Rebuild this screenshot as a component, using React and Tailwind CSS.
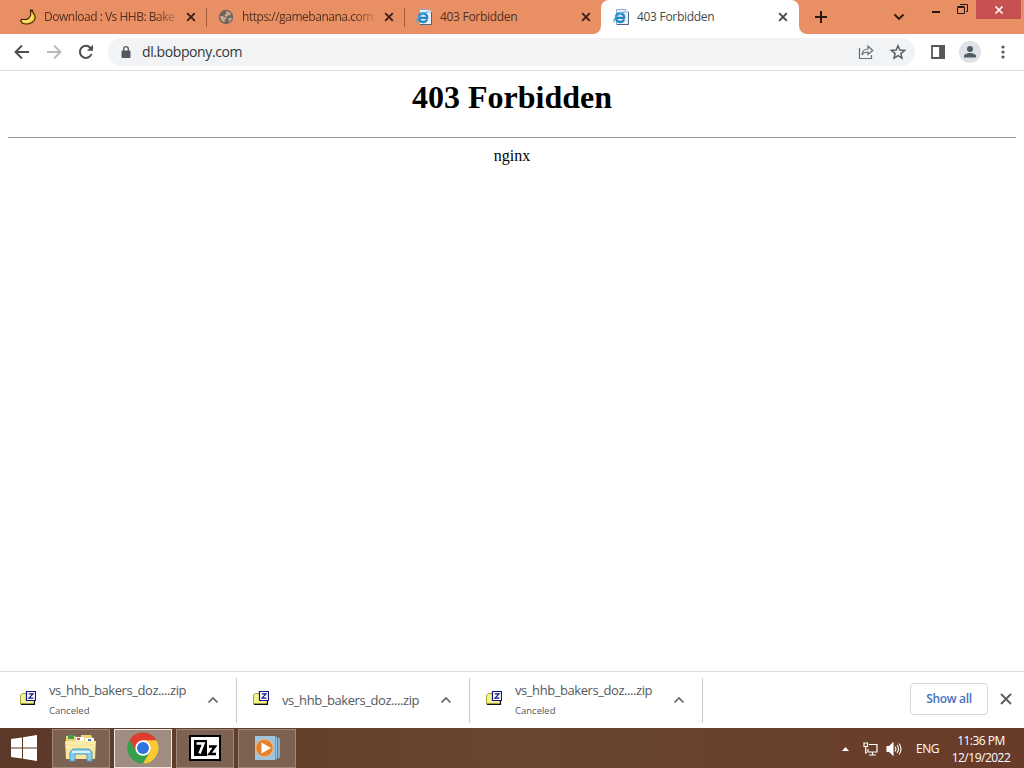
import React from 'react';

const CloseIcon = ({ className = 'text-[#3a2a22]' }) => (
  <svg viewBox="0 0 14 14" className={`w-3.5 h-3.5 shrink-0 ${className}`} fill="none" stroke="currentColor" strokeWidth="1.900">
    <path d="M3.200 3.200l7.600 7.600M10.800 3.200l-7.600 7.600" />
  </svg>
);

const BananaIcon = () => (
  <svg viewBox="0 0 16 16" className="w-4 h-4 shrink-0">
    <path d="M10.500 1l2 .2.3 2.300c2.500 2.200 3 5 1.600 7.700-2 3.500-8.700 4.800-12.200 2.800L.6 11.600l1-1.300c4 .8 7.600-.3 8.700-3.300.6-1.500.5-2.600.2-4z" fill="#f7cf35" stroke="#3b2108" strokeWidth="1.100" />
    <path d="M3 12c4.300.9 8-.8 9-5" fill="none" stroke="#fff3a0" strokeWidth="1.300" />
    <path d="M10.600 1.300h1.800v1.500h-1.800z" fill="#3b2108" />
  </svg>
);

const GlobeIcon = () => (
  <svg viewBox="0 0 16 16" className="w-4 h-4 shrink-0">
    <circle cx="8" cy="8" r="7.200" fill="#6c665f" />
    <path d="M2.200 7c1.800-.2 3.300 0 4 1.200h2.300v1.600l-1.700.8v2.600C4 12.800 2 10 2.200 7zM8 2.200c2.200-.2 4 .8 5 2.600l-1.200 1.700-2.300.1-.8 1.200-1.900-.6V5.500l1.400-.6zM10.500 9l3.300-.3c-.2 2-1.300 3.400-2.900 4.300z" fill="#c9a78e" />
  </svg>
);

const IeIcon = () => (
  <svg viewBox="0 0 16 16" className="w-4 h-4 shrink-0">
    <path d="M3.500.5h9L15.500 3v12.500h-12z" fill="#e9f2fb" stroke="#8eabc9" />
    <path d="M15.500 3v12.500H4" fill="none" stroke="#4c6685" />
    <path d="M12.500.5V3h3" fill="#fff" stroke="#8eabc9" strokeWidth=".8" />
    <path d="M11 10.300c-.6 1.800-2 2.700-3.800 2.700-2.500 0-4.200-1.700-4.200-4.200s1.700-4.300 4.200-4.300c2.600 0 4.200 1.800 4 4.400H4" fill="none" stroke="#2384c6" strokeWidth="2.300" />
    <path d="M1.200 13.500C-.5 10.700 5 4 11.700 3.200" fill="none" stroke="#49b0e4" strokeWidth="1.200" />
  </svg>
);

const Tab = ({ icon, title, width, closeGap = 'ml-[9px]', fade, separator, active }) => (
  <div className={`relative flex h-[34px] shrink-0 items-center pl-3 ${width} ${active ? 'rounded-t-lg bg-white text-[#45494d]' : 'text-[#54301f]'}`}>
    {separator && <div className="absolute left-0 top-2 h-[19px] w-px bg-[#a65f3e]" />}
    {active && (
      <>
        <svg viewBox="0 0 8 8" className="absolute bottom-0 -left-2 w-2 h-2"><path d="M8 0v8H0a8 8 0 0 0 8-8z" fill="#fff" /></svg>
        <svg viewBox="0 0 8 8" className="absolute bottom-0 -right-2 w-2 h-2"><path d="M0 0v8h8a8 8 0 0 1-8-8z" fill="#fff" /></svg>
      </>
    )}
    {icon}
    <span className={`ml-2 w-[131px] shrink-0 whitespace-nowrap text-[12px] leading-4 ${fade ? '[mask-image:linear-gradient(to_right,#000_112px,transparent_138px)]' : ''}`}>
      {title}
    </span>
    <CloseIcon className={`${closeGap} ${active ? 'text-[#45494d]' : 'text-[#3d2015]'}`} />
  </div>
);

const TabStrip = () => (
  <header className="flex h-[34px] bg-[#e98f64] pl-2">
    <Tab width="w-[198px]" icon={<BananaIcon />} title={<span className="tracking-[-0.48px]">Download : Vs HHB: Bake</span>} fade />
    <Tab width="w-[198px]" icon={<GlobeIcon />} title={<span className="tracking-[-0.47px]">https://gamebanana.com</span>} fade separator />
    <Tab width="w-[197px]" closeGap="ml-2" icon={<IeIcon />} title={<span className="tracking-[-0.3px]">403 Forbidden</span>} separator />
    <Tab width="w-[198px]" closeGap="ml-2" icon={<IeIcon />} title={<span className="tracking-[-0.3px]">403 Forbidden</span>} active />
    <svg viewBox="0 0 14 14" className="mt-2.5 ml-[15px] w-3.5 h-3.5" stroke="#2b1710" strokeWidth="2"><path d="M7 1v12M1 7h12" /></svg>
    <div className="ml-auto flex">
      <svg viewBox="0 0 12 12" className="mt-[11px] w-3 h-3" fill="none" stroke="#2b1710" strokeWidth="1.800"><path d="M1.500 3.500L6 8l4.500-4.500" /></svg>
      <div className="mt-[11px] ml-[27px] h-0.5 w-2 bg-[#2b1710]" />
      <svg viewBox="0 0 11 11" className="mt-1 ml-[17px] w-[11px] h-[11px]" fill="none" stroke="#2b1710"><path d="M.5 3.500h7v6h-7zM.5 2.500h7M3 .5h7.500v7H9" /></svg>
      <div className="mr-[3px] ml-2 flex h-[19px] w-[45px] items-center justify-center bg-[#c75050]">
        <svg viewBox="0 0 10 10" className="w-2.5 h-2.5" stroke="#fff" strokeWidth="1.700"><path d="M1.500 1.500l7 7M8.500 1.500l-7 7" /></svg>
      </div>
    </div>
  </header>
);

const Toolbar = () => (
  <nav className="flex h-[37px] items-center border-b border-[#dcdddf] bg-white pl-3.5 text-[#5a5e62]">
    <svg viewBox="0 0 16 16" className="w-4 h-4" fill="none" stroke="#4b4f53" strokeWidth="1.900"><path d="M15 8H2M8 1.500L1.500 8 8 14.500" /></svg>
    <svg viewBox="0 0 16 16" className="ml-4 w-4 h-4" fill="none" stroke="#b7b9bb" strokeWidth="1.800"><path d="M1 8h13M8 1.500L14.500 8 8 14.500" /></svg>
    <svg viewBox="0 0 16 16" className="ml-4 w-4 h-4" fill="none" stroke="#4b4f53" strokeWidth="2"><path d="M13.500 10A6 6 0 1 1 12.300 3.800L14 5.500" /><path d="M15 .8v6H9z" fill="#4b4f53" stroke="none" /></svg>
    <div className="ml-3.5 flex h-7 w-[807px] items-center rounded-full bg-[#f1f3f4] pr-[9px] pl-3">
      <svg viewBox="0 0 12 14" className="w-3 h-3.5" fill="#55595d"><path d="M2.500 5.500h7a1 1 0 0 1 1 1V12a1 1 0 0 1-1 1h-7a1 1 0 0 1-1-1V6.500a1 1 0 0 1 1-1z" /><path d="M3.700 6V4a2.300 2.300 0 0 1 4.600 0v2" fill="none" stroke="#55595d" strokeWidth="1.300" /></svg>
      <span className="ml-2.5 text-[14px] leading-5 tracking-[-0.4px] text-[#33363a]">dl.bobpony.com</span>
      <svg viewBox="0 0 16 16" className="ml-auto w-4 h-4" fill="none" stroke="#6a6e72" strokeWidth="1.200"><path d="M1.500 4v10.500h12V11" /><path d="M4 11c.3-4 2.500-6 6-6V2.200L14.800 6.500 10 10.500V8c-3 0-4.700.8-6 3z" /></svg>
      <svg viewBox="0 0 16 16" className="ml-4 w-4 h-4" fill="none" stroke="#5a5e62" strokeWidth="1.500"><path d="M8 1.800l1.800 4.300 4.700.4-3.600 3.100 1.100 4.600-4-2.500-4 2.500 1.100-4.600L1.500 6.500l4.700-.4z" /></svg>
    </div>
    <svg viewBox="0 0 14 14" className="ml-4 w-3.5 h-3.5" fill="none" stroke="#55595d" strokeWidth="1.800"><path d="M1 1h12v12H1z" /><path d="M9 1h4v12H9z" fill="#55595d" /></svg>
    <div className="ml-3.5 flex h-[22px] w-[22px] items-center justify-center rounded-full bg-[#dfe2e6]">
      <svg viewBox="0 0 14 14" className="w-3.5 h-3.5" fill="#4f5b66"><circle cx="7" cy="4" r="3" /><path d="M1 12.500V11c0-2 4-3 6-3s6 1 6 3v1.500z" /></svg>
    </div>
    <svg viewBox="0 0 4 14" className="ml-5 w-1 h-3.5" fill="#55595d"><circle cx="2" cy="2" r="1.600" /><circle cx="2" cy="7" r="1.600" /><circle cx="2" cy="12" r="1.600" /></svg>
  </nav>
);

const ZipIcon = () => (
  <svg viewBox="0 0 16 16" className="w-4 h-4 shrink-0 -translate-y-0.5">
    <path d="M.5 5L2 3.500h4v1h8v9.500H.5z" fill="#f4f48c" stroke="#a3a34c" />
    <path d="M1 14.400h13.500V11" fill="none" stroke="#111" strokeWidth="1.100" />
    <path d="M6.500 1.500h9v9h-9z" fill="#fff" stroke="#15158a" strokeWidth="1.200" />
    <path d="M8.700 3.900h4.300l-4 4.200h4.500" fill="none" stroke="#15158a" strokeWidth="1.200" />
  </svg>
);

const DownloadItem = ({ status, className }) => (
  <div className={`flex h-[45px] items-center border-r border-[#c9cbce] pr-[17px] ${className}`}>
    <ZipIcon />
    <div className="ml-[13px] whitespace-nowrap">
      <p className="text-[13px] leading-[18px] tracking-[-0.43px] text-[#55585c]">vs_hhb_bakers_doz....zip</p>
      {status && <p className="mt-1 text-[9.5px] leading-4 text-[#55585c]">{status}</p>}
    </div>
    <svg viewBox="0 0 12 12" className="ml-auto w-3 h-3 shrink-0" fill="none" stroke="#606468" strokeWidth="1.700"><path d="M1.500 8.500L6 4l4.500 4.500" /></svg>
  </div>
);

const DownloadShelf = () => (
  <div className="flex h-[57px] items-center border-t border-[#d9dadc] bg-white">
    <DownloadItem className="w-[237px] pl-5" status="Canceled" />
    <DownloadItem className="w-[233px] pl-4" />
    <DownloadItem className="w-[233px] pl-4" status="Canceled" />
    <button className="mb-0.5 ml-auto h-8 w-[78px] rounded border border-[#d5d7da] text-[12px] font-semibold tracking-[-0.3px] text-[#4672bd]">Show all</button>
    <svg viewBox="0 0 12 12" className="mr-3 mb-0.5 ml-3 w-3 h-3" stroke="#5a5e62" strokeWidth="1.900"><path d="M1 1l10 10M11 1L1 11" /></svg>
  </div>
);

const TaskButton = ({ active, children }) => (
  <div className={`flex h-[39px] w-[58px] items-center justify-center border ${active ? 'border-[#eee9e5] bg-[#a08c81]' : 'border-[#a08778] bg-[#7d6153]'}`}>
    {children}
  </div>
);

const ExplorerIcon = () => (
  <svg viewBox="0 0 34 30" className="w-[34px] h-[30px]">
    <path d="M2 3h9l2 2h4V2h10l2 4v18H2z" fill="#efd477" />
    <path d="M4 2h6v4H4z" fill="#4a9a50" />
    <path d="M12 4h8v4h-8z" fill="#fff" />
    <path d="M13 5h3v2h-3z" fill="#d4513b" />
    <path d="M21 5h9v4h-9z" fill="#fff" />
    <path d="M24 6h3v2h-3z" fill="#4485c0" />
    <path d="M1 8h31l-1 18H2z" fill="#f8e69c" />
    <path d="M2 10h29M2 14h29" stroke="#fff3bd" />
    <path d="M6 28V19l3-3h16l3 3v9h-5v-7H11v7z" fill="#8bcbea" stroke="#4b9dcc" />
    <path d="M8 19h18" stroke="#d9f3fc" strokeWidth="2" />
  </svg>
);

const ChromeIcon = () => (
  <svg viewBox="0 0 32 32" className="w-8 h-8">
    <circle cx="16" cy="16" r="15.500" fill="#35a04c" />
    <path d="M16 16L2.600 8.200A15.500 15.500 0 0 1 29.400 8.200z" fill="#e33b2e" />
    <path d="M16 8.200h13.400A15.500 15.500 0 0 1 16 31.500l6.800-11.600z" fill="#fcc934" />
    <path d="M2.600 8.200l6.700 11.700L16 16z" fill="#e33b2e" />
    <path d="M2.600 8.200l6.700 11.700 6.700 3.900-4.500 7A15.500 15.500 0 0 1 2.600 8.200z" fill="#35a04c" />
    <circle cx="16" cy="16" r="7.700" fill="#fff" />
    <circle cx="16" cy="16" r="6" fill="#2f73dc" />
  </svg>
);

const SevenZipIcon = () => (
  <svg viewBox="0 0 32 26" className="w-8 h-[26px]">
    <path d="M1 1h30v24H1z" fill="#fff" stroke="#000" strokeWidth="2" />
    <path d="M5 5h13v16H5z" fill="#000" />
    <path d="M7.500 8.500h7l-4 10" fill="none" stroke="#fff" strokeWidth="2.500" />
    <path d="M20 11.500h6l-5.500 7.500h6.500" fill="none" stroke="#000" strokeWidth="2.500" />
  </svg>
);

const MediaIcon = () => (
  <svg viewBox="0 0 26 26" className="w-[26px] h-[26px]">
    <path d="M1 1h20v24H1z" fill="#9fc5df" />
    <path d="M21 1l2 1v22l-2 1z" fill="#528fba" />
    <path d="M22.500 2v22M25 3v20" stroke="#92cbed" strokeWidth="1.400" />
    <circle cx="10.500" cy="13" r="8.700" fill="#e6812b" stroke="#f4ba7a" />
    <path d="M7.500 7.500l9.500 5.500-9.500 5.500z" fill="#fff" />
  </svg>
);

const Taskbar = () => (
  <footer className="flex h-10 items-center bg-linear-to-r from-[#5b3828] via-[#68462f] to-[#693b29] text-white">
    <svg viewBox="0 0 26 26" className="ml-[11px] w-[26px] h-[26px]" fill="#fff"><path d="M0 4l11-1.600v10.100H0zM12 2.200L26 0v12.500H12zM0 13.500h11v10L0 22zM12 13.500h14V26l-14-2.300z" /></svg>
    <div className="ml-[15px] flex gap-1">
      <TaskButton><ExplorerIcon /></TaskButton>
      <TaskButton active><ChromeIcon /></TaskButton>
      <TaskButton><SevenZipIcon /></TaskButton>
      <TaskButton><MediaIcon /></TaskButton>
    </div>
    <svg viewBox="0 0 7 4" className="mt-0.5 ml-auto h-1 w-[7px]" fill="#fff"><path d="M3.500 0L7 4H0z" /></svg>
    <svg viewBox="0 0 15 14" className="mt-px ml-3.5 h-3.5 w-[15px]" fill="none" stroke="#fff" strokeWidth="1.200"><path d="M6 2.500h8v7.500H5V7M9.500 10v3M6 13h7M1 1h3.500v3.500H1zM2.700 4.500V11H4" /></svg>
    <svg viewBox="0 0 16 14" className="mt-px ml-2 w-4 h-3.5" fill="none" stroke="#fff" strokeWidth="1.100"><path d="M1 4.500h2.500L7 1v12L3.500 9.500H1z" fill="#fff" /><path d="M9 4.500q1.800 2.500 0 5M11 3q3 4 0 8M13 1.500q4 5.500 0 11" /></svg>
    <span className="mt-px ml-3.5 w-6 text-[12px] tracking-[-0.5px]">ENG</span>
    <div className="mt-0.5 mr-3 ml-2.5 w-[62px] whitespace-nowrap text-center text-[12px] leading-[17px]">
      <p className="tracking-[-0.5px]">11:36 PM</p>
      <p className="tracking-[-0.5px]">12/19/2022</p>
    </div>
  </footer>
);

const App = () => (
  <div className="flex h-screen w-full flex-col overflow-hidden bg-white font-['Open_Sans','Noto_Sans',sans-serif]">
    <TabStrip />
    <Toolbar />
    <main className="flex-1 px-2 text-center font-['Liberation_Serif',serif] text-black">
      <h1 className="mt-2 text-[32px] leading-[37px] font-bold">403 Forbidden</h1>
      <hr className="mt-[21px] border-t border-[#969696]" />
      <p className="mt-[9px] text-[16px] leading-[18px]">nginx</p>
    </main>
    <DownloadShelf />
    <Taskbar />
  </div>
);

export default App;
